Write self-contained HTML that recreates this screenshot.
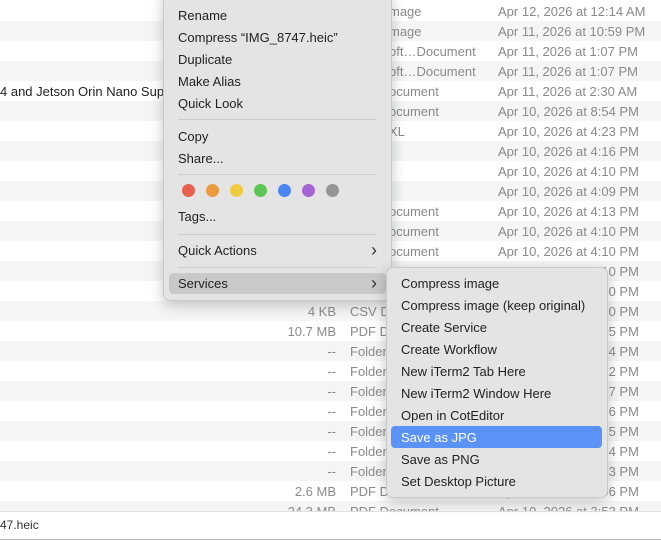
<!DOCTYPE html><html><head><style>
body{margin:0;width:661px;height:540px;overflow:hidden;background:#fff;font-family:"Liberation Sans",sans-serif;font-size:13px;position:relative;color:#262626}
.row{position:absolute;left:0;width:661px;height:20px}
.row.g{background:#f4f5f5}
.t{position:absolute;top:3px;white-space:nowrap;color:#8a8a8a}
.menu{position:absolute;background:#e4e4e4;border:1px solid #c9c9c9;border-radius:7px;box-shadow:0 4px 14px rgba(0,0,0,.22)}
.it{position:absolute;left:14px;white-space:nowrap;color:#222;font-size:13px}
.sep{position:absolute;left:14px;right:14px;height:1px;background:#cdcdcd}
.dot{position:absolute;width:13px;height:13px;border-radius:50%}
.chev{position:absolute;right:14px;font-size:18px;line-height:14px;color:#333}
</style></head><body>
<div id="rows"></div>
<script>
var d=[["mage","Apr 12, 2026 at 12:14 AM"],["mage","Apr 11, 2026 at 10:59 PM"],["oft…Document","Apr 11, 2026 at 1:07 PM"],["oft…Document","Apr 11, 2026 at 1:07 PM"],["ocument","Apr 11, 2026 at 2:30 AM"],["ocument","Apr 10, 2026 at 8:54 PM"],["XL","Apr 10, 2026 at 4:23 PM"],["","Apr 10, 2026 at 4:16 PM"],["","Apr 10, 2026 at 4:10 PM"],["","Apr 10, 2026 at 4:09 PM"],["ocument","Apr 10, 2026 at 4:13 PM"],["ocument","Apr 10, 2026 at 4:10 PM"],["ocument","Apr 10, 2026 at 4:10 PM"],["","Apr 10, 2026 at 4:10 PM"],["","Apr 10, 2026 at 4:10 PM"],["CSV Document","Apr 10, 2026 at 4:10 PM","4 KB"],["PDF Document","Apr 10, 2026 at 4:05 PM","10.7 MB"],["Folder","Apr 10, 2026 at 4:04 PM","--"],["Folder","Apr 10, 2026 at 4:02 PM","--"],["Folder","Apr 10, 2026 at 3:57 PM","--"],["Folder","Apr 10, 2026 at 3:56 PM","--"],["Folder","Apr 10, 2026 at 3:55 PM","--"],["Folder","Apr 10, 2026 at 3:54 PM","--"],["Folder","Apr 10, 2026 at 3:53 PM","--"],["PDF Document","Apr 10, 2026 at 3:06 PM","2.6 MB"],["PDF Document","Apr 10, 2026 at 3:53 PM","24.3 MB"]];
var h="";d.forEach(function(r,k){var top=k==0?0:1+20*k;var hh=k==0?21:20;var tp=k==0?4:3;var kx=r[2]?350:389;h+='<div class="row'+(k%2?' g':'')+'" style="top:'+top+'px;height:'+hh+'px"><span class="t" style="left:'+kx+'px;top:'+tp+'px">'+r[0]+'</span><span class="t" style="left:498px;top:'+tp+'px">'+r[1]+'</span>'+(r[2]?'<span class="t" style="right:325px">'+r[2]+'</span>':'')+(k==4?'<span class="t" style="left:0;color:#222">4 and Jetson Orin Nano Super</span>':'')+'</div>';});
document.getElementById("rows").innerHTML=h;
</script>
<div style="position:absolute;left:0;top:511px;width:661px;height:27px;background:#fff;border-top:1px solid #e0e0e0;border-bottom:1px solid #bdbdbd"><span style="position:absolute;left:0;top:6px;color:#333;font-size:12px">47.heic</span></div>
<div class="menu" style="left:163px;top:-10px;width:227px;height:309px">
<div class="it" style="top:17px">Rename</div>
<div class="it" style="top:39px">Compress “IMG_8747.heic”</div>
<div class="it" style="top:61px">Duplicate</div>
<div class="it" style="top:83px">Make Alias</div>
<div class="it" style="top:105px">Quick Look</div>
<div class="sep" style="top:128px"></div>
<div class="it" style="top:138px">Copy</div>
<div class="it" style="top:160px">Share...</div>
<div class="sep" style="top:183px"></div>
<div class="dot" style="left:18px;top:193px;background:#e8604f"></div>
<div class="dot" style="left:42px;top:193px;background:#eb9a3f"></div>
<div class="dot" style="left:66px;top:193px;background:#f0cb3f"></div>
<div class="dot" style="left:90px;top:193px;background:#5cc553"></div>
<div class="dot" style="left:114px;top:193px;background:#4c86f5"></div>
<div class="dot" style="left:138px;top:193px;background:#a564d6"></div>
<div class="dot" style="left:162px;top:193px;background:#959595"></div>
<div class="it" style="top:218px">Tags...</div>
<div class="sep" style="top:243px"></div>
<div class="it" style="top:252px">Quick Actions</div><div class="chev" style="top:252px">&#x203A;</div>
<div class="sep" style="top:276px"></div>
<div style="position:absolute;left:5px;top:282px;width:217px;height:21px;background:#c9c9c9;border-radius:4px"></div>
<div class="it" style="top:285px">Services</div><div class="chev" style="top:285px">&#x203A;</div>
</div>
<div class="menu" style="left:386px;top:267px;width:220px;height:229px">
<div style="position:absolute;left:4px;top:158px;width:211px;height:22px;background:#5a92f5;border-radius:4px"></div>
<div class="it" style="top:8px">Compress image</div>
<div class="it" style="top:30px">Compress image (keep original)</div>
<div class="it" style="top:52px">Create Service</div>
<div class="it" style="top:74px">Create Workflow</div>
<div class="it" style="top:96px">New iTerm2 Tab Here</div>
<div class="it" style="top:118px">New iTerm2 Window Here</div>
<div class="it" style="top:140px">Open in CotEditor</div>
<div class="it" style="top:162px;color:#fff">Save as JPG</div>
<div class="it" style="top:184px">Save as PNG</div>
<div class="it" style="top:206px">Set Desktop Picture</div>
</div>
</body></html>
